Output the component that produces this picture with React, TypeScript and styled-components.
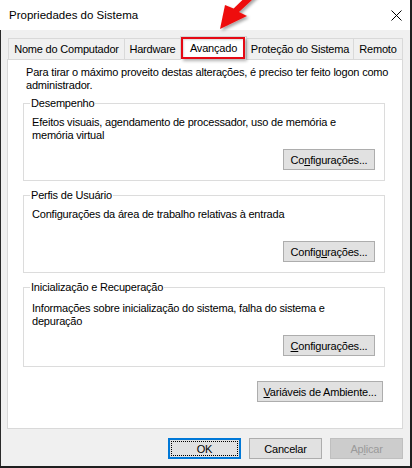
import React from "react";
import styled, { createGlobalStyle } from "styled-components";

const GlobalStyle = createGlobalStyle`
  html, body {
    margin: 0;
    padding: 0;
    background: #1f1f1f;
  }
  body {
    font-family: "Liberation Sans", Arial, sans-serif;
    font-size: 11px;
    letter-spacing: -0.2px;
    color: #000;
  }
`;

const Window = styled.div`
  position: relative;
  width: 410px;
  height: 466px;
  display: flex;
  flex-direction: column;
  background: #f0f0f0;
`;

const TitleBar = styled.div`
  flex: none;
  height: 30px;
  display: flex;
  align-items: center;
  justify-content: space-between;
  padding: 0 8px 0 9px;
  background: #fff;
`;

const Title = styled.span`
  font-size: 11.5px;
  letter-spacing: 0;
`;

const CloseButton = styled.div`
  width: 11px;
  height: 11px;
  display: flex;
`;

const Body = styled.div`
  flex: 1;
  display: flex;
  flex-direction: column;
  padding: 6px 7px 0 6px;
  border-left: 1px solid #2a2a2a;
`;

const TabStrip = styled.div`
  position: relative;
  z-index: 1;
  height: 23px;
  display: flex;
  align-items: flex-end;
  padding-left: 1px;
`;

const Tab = styled.div<{ $width: number; $active?: boolean }>`
  position: relative;
  box-sizing: border-box;
  width: ${({ $width }) => $width}px;
  height: ${({ $active }) => ($active ? 24 : 21)}px;
  margin-left: -1px;
  margin-bottom: ${({ $active }) => ($active ? -1 : 0)}px;
  z-index: ${({ $active }) => ($active ? 2 : 1)};
  display: flex;
  align-items: center;
  justify-content: center;
  padding-bottom: ${({ $active }) => ($active ? 1 : 0)}px;
  background: ${({ $active }) => ($active ? "#fff" : "#f0f0f0")};
  border: 1px solid #d9d9d9;
  border-bottom: none;
  white-space: nowrap;

  &:first-child {
    margin-left: 0;
  }
`;

const Highlight = styled.div`
  position: absolute;
  top: 0;
  left: 0;
  right: 1px;
  bottom: 1px;
  border: 2px solid #e50914;
  box-shadow: 2px 2px 3px rgba(0, 0, 0, 0.3), inset 1px 1px 2px rgba(0, 0, 0, 0.15);
  pointer-events: none;
`;

const Arrow = styled.svg`
  position: absolute;
  top: 0;
  left: 200px;
  z-index: 5;
  overflow: visible;
`;

const Panel = styled.div`
  box-sizing: border-box;
  height: 370px;
  display: flex;
  flex-direction: column;
  padding: 6px 17px 0 15px;
  background: #fff;
  border: 1px solid #d9d9d9;
`;

const Intro = styled.p`
  margin: 0 0 11px 3px;
  line-height: 13px;
  white-space: nowrap;
`;

const Group = styled.section<{ $height: number; $gap: number }>`
  box-sizing: border-box;
  height: ${({ $height }) => $height}px;
  margin-bottom: 14px;
  padding: 0 9px 10px 8px;
  display: flex;
  flex-direction: column;
  border: 1px solid #dcdcdc;
`;

const Caption = styled.h3<{ $gap: number }>`
  align-self: flex-start;
  margin: -8px 0 ${({ $gap }) => $gap}px -2px;
  padding: 0 1px;
  font-size: 11px;
  font-weight: normal;
  line-height: 14px;
  background: #fff;
`;

const GroupText = styled.p`
  margin: 0;
  line-height: 13px;
  white-space: nowrap;
`;

const Button = styled.button<{ $width: number; $default?: boolean }>`
  position: relative;
  box-sizing: border-box;
  flex: none;
  width: ${({ $width }) => $width}px;
  height: 21px;
  padding: 0;
  font-family: inherit;
  font-size: 11px;
  letter-spacing: -0.2px;
  color: #000;
  background: #e1e1e1;
  border: 1px solid ${({ $default }) => ($default ? "#0078d7" : "#adadad")};
  box-shadow: ${({ $default }) => ($default ? "inset 0 0 0 1px #0078d7" : "none")};
  white-space: nowrap;

  &:disabled {
    color: #9a9a9a;
    background: #cccccc;
    border-color: #bfbfbf;
  }

  ${({ $default }) =>
    $default &&
    `
    &::after {
      content: "";
      position: absolute;
      inset: 2px;
      border: 1px dotted #000;
    }
  `}
`;

const GroupButton = styled(Button)`
  margin-top: auto;
  align-self: flex-end;
`;

const EnvButton = styled(Button)`
  margin-right: 2px;
  align-self: flex-end;
`;

const Footer = styled.div`
  display: flex;
  justify-content: flex-end;
  gap: 8px;
  margin-top: 9px;
`;

const tabs = [
  { label: "Nome do Computador", width: 117 },
  { label: "Hardware", width: 57 },
  { label: "Avançado", width: 67, active: true },
  { label: "Proteção do Sistema", width: 108 },
  { label: "Remoto", width: 50 },
];

const App: React.FC = () => {
  return (
    <>
      <GlobalStyle />
      <Window>
        <TitleBar>
          <Title>Propriedades do Sistema</Title>
          <CloseButton>
            <svg width="11" height="11" viewBox="0 0 11 11">
              <path d="M0.5 0.5 L10.5 10.5 M10.5 0.5 L0.5 10.5" stroke="#000" strokeWidth="1" />
            </svg>
          </CloseButton>
        </TitleBar>

        <Body>
          <TabStrip>
            {tabs.map((t) => (
              <Tab key={t.label} $width={t.width} $active={t.active}>
                {t.label}
                {t.active && <Highlight />}
              </Tab>
            ))}
          </TabStrip>

          <Panel>
            <Intro>
              Para tirar o máximo proveito destas alterações, é preciso ter feito logon como
              <br />
              administrador.
            </Intro>

            <Group $height={78} $gap={6}>
              <Caption $gap={6}>Desempenho</Caption>
              <GroupText>
                Efeitos visuais, agendamento de processador, uso de memória e
                <br />
                memória virtual
              </GroupText>
              <GroupButton $width={92}>
                Co<u>n</u>figurações...
              </GroupButton>
            </Group>

            <Group $height={78} $gap={6}>
              <Caption $gap={6}>Perfis de Usuário</Caption>
              <GroupText>Configurações da área de trabalho relativas à entrada</GroupText>
              <GroupButton $width={92}>
                Config<u>u</u>rações...
              </GroupButton>
            </Group>

            <Group $height={80} $gap={8}>
              <Caption $gap={8}>Inicialização e Recuperação</Caption>
              <GroupText>
                Informações sobre inicialização do sistema, falha do sistema e
                <br />
                depuração
              </GroupText>
              <GroupButton $width={92}>
                <u>C</u>onfigurações...
              </GroupButton>
            </Group>

            <EnvButton $width={126}>
              <u>V</u>ariáveis de Ambiente...
            </EnvButton>
          </Panel>

          <Footer>
            <Button $width={73} $default>
              OK
            </Button>
            <Button $width={73}>Cancelar</Button>
            <Button $width={73} disabled>
              Ap<u>l</u>icar
            </Button>
          </Footer>
        </Body>

        <Arrow width="80" height="40" viewBox="200 0 80 40">
          <defs>
            <filter id="arrowShadow" x="-30%" y="-30%" width="160%" height="160%">
              <feDropShadow dx="2" dy="2" stdDeviation="1.5" floodColor="#000" floodOpacity="0.35" />
            </filter>
          </defs>
          <polygon
            points="220,29 225,5 233.6,8.5 259.6,-16.5 264.4,-11.5 239,12 247,16"
            fill="#ee1111"
            filter="url(#arrowShadow)"
          />
        </Arrow>
      </Window>
    </>
  );
};

export default App;
